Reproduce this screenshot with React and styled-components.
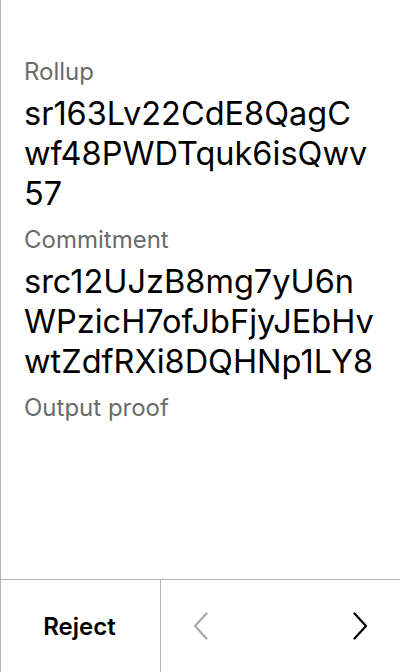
import React from "react";
import styled, { createGlobalStyle } from "styled-components";

const GlobalStyle = createGlobalStyle`
  html, body {
    margin: 0;
    padding: 0;
    background: #fff;
  }
  body {
    font-family: Inter, "Noto Sans", sans-serif;
    color: #000;
  }
`;

const Screen = styled.div`
  width: 400px;
  height: 672px;
  box-sizing: border-box;
  border-left: 1px solid #b3b3b3;
  display: flex;
  flex-direction: column;
  background: #fff;
`;

const Content = styled.div`
  flex: 1;
  padding: 56px 23px 0;
  display: flex;
  flex-direction: column;
`;

const Label = styled.div`
  font-size: 24px;
  line-height: 32px;
  color: #6b6b6b;
  margin-top: ${(p) => (p.$first ? "0" : "10px")};
`;

const Value = styled.div`
  font-size: 32.5px;
  line-height: 40px;
  color: #000;
  margin-top: 6px;
`;

const ValueLine = styled.div`
  white-space: nowrap;
`;

const Footer = styled.div`
  height: 92px;
  border-top: 1px solid #b3b3b3;
  display: flex;
`;

const RejectButton = styled.button`
  width: 160px;
  border: none;
  border-right: 1px solid #b3b3b3;
  background: none;
  font-family: inherit;
  font-size: 24px;
  font-weight: 600;
  color: #000;
  padding: 0 2px 0 0;
  cursor: pointer;
`;

const Nav = styled.div`
  flex: 1;
  display: flex;
  justify-content: space-between;
`;

const NavButton = styled.button`
  width: 80px;
  border: none;
  background: none;
  padding: 0;
  display: flex;
  align-items: center;
  justify-content: center;
  color: ${(p) => (p.disabled ? "#aaaaaa" : "#000")};
  cursor: ${(p) => (p.disabled ? "default" : "pointer")};
`;

const Chevron = ({ dir }) => (
  <svg width="16" height="28" viewBox="0 0 16 28" fill="none">
    <polyline
      points={dir === "left" ? "13.5,1.5 2,14 13.5,26.5" : "2.5,1.5 14,14 2.5,26.5"}
      stroke="currentColor"
      strokeWidth="2.2"
      strokeLinecap="round"
      strokeLinejoin="round"
    />
  </svg>
);

// values are shown in fixed chunks like the device screen
const fields = [
  { label: "Rollup", lines: ["sr163Lv22CdE8QagC", "wf48PWDTquk6isQwv", "57"] },
  {
    label: "Commitment",
    lines: ["src12UJzB8mg7yU6n", "WPzicH7ofJbFjyJEbHv", "wtZdfRXi8DQHNp1LY8"],
  },
  { label: "Output proof" },
];

export default function App() {
  return (
    <>
      <GlobalStyle />
      <Screen>
        <Content>
          {fields.map((f, i) => (
            <React.Fragment key={f.label}>
              <Label $first={i === 0}>{f.label}</Label>
              {f.lines && (
                <Value>
                  {f.lines.map((l) => (
                    <ValueLine key={l}>{l}</ValueLine>
                  ))}
                </Value>
              )}
            </React.Fragment>
          ))}
        </Content>
        <Footer>
          <RejectButton>Reject</RejectButton>
          <Nav>
            <NavButton disabled>
              <Chevron dir="left" />
            </NavButton>
            <NavButton>
              <Chevron dir="right" />
            </NavButton>
          </Nav>
        </Footer>
      </Screen>
    </>
  );
}
